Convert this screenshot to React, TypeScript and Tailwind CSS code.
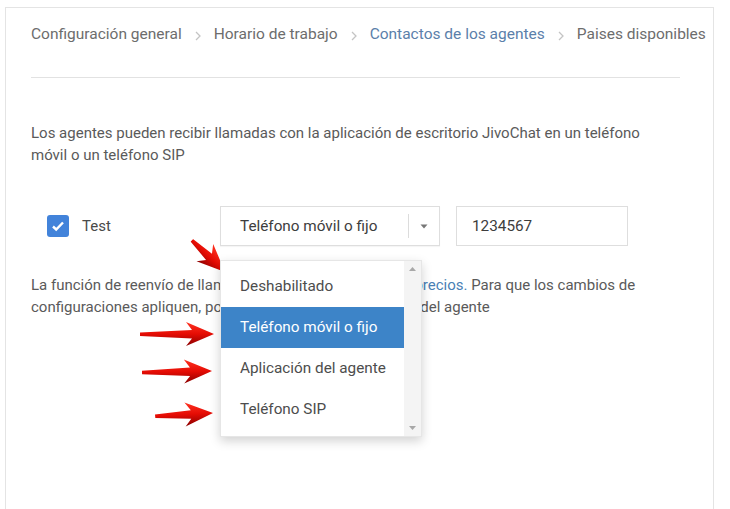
import React from 'react';

const crumbs = [
  { label: 'Configuración general' },
  { label: 'Horario de trabajo' },
  { label: 'Contactos de los agentes', active: true },
  { label: 'Paises disponibles' },
];

const options = ['Deshabilitado', 'Teléfono móvil o fijo', 'Aplicación del agente', 'Teléfono SIP'];

function Chevron() {
  return (
    <svg width="8" height="12" viewBox="0 0 8 12" className="shrink-0 mx-[12px] mt-[3px]">
      <path d="M2 2l4 4-4 4" fill="none" stroke="#c4c4c4" strokeWidth="1.3" />
    </svg>
  );
}

function RedArrow({ className, rotate = 0, length = 72, id }: { className: string; rotate?: number; length?: number; id: string }) {
  const head = 22;
  const t = length - head;
  return (
    <svg
      width={length}
      height="26"
      viewBox={`0 0 ${length} 26`}
      className={className}
      style={{ transform: `rotate(${rotate}deg)`, transformOrigin: 'right center' }}
    >
      <defs>
        <linearGradient id={id} x1="0" y1="0" x2="0" y2="1">
          <stop offset="0" stopColor="#ff3322" />
          <stop offset="0.5" stopColor="#e50c04" />
          <stop offset="1" stopColor="#8a0000" />
        </linearGradient>
      </defs>
      <path
        d={`M0 11.5 L${t} 9 L${t - 6} 1 L${length} 13 L${t - 6} 25 L${t} 17.5 L0 15 Z`}
        fill={`url(#${id})`}
      />
    </svg>
  );
}

export default function App() {
  return (
    <div className="w-[730px] h-[509px] overflow-hidden bg-white font-['Roboto',sans-serif] relative">
      <div className="ml-[5px] mt-[7px] w-[709px] min-h-[520px] border border-[#e4e4e4] px-[25px]">
        <div className="flex items-center pt-[15px] text-[15.5px] leading-[22px] text-[#6d6d6d] whitespace-nowrap">
          {crumbs.map((c, i) => (
            <React.Fragment key={c.label}>
              {i > 0 && <Chevron />}
              <span className={'shrink-0 ' + (c.active ? 'text-[#5b80aa]' : '')}>{c.label}</span>
            </React.Fragment>
          ))}
        </div>
        <div className="mt-[32px] w-[649px] border-t border-[#e2e2e2]" />

        <p className="mt-[44px] text-[15px] leading-[22px] text-[#5a5a5a] whitespace-nowrap">
          Los agentes pueden recibir llamadas con la aplicación de escritorio JivoChat en un teléfono
          <br />
          móvil o un teléfono SIP
        </p>

        <div className="mt-[40px] flex items-center h-[40px]">
          <div className="w-[189px] flex items-center">
            <div className="ml-[16px] w-[22px] h-[22px] rounded-[3px] bg-[#4283da] flex items-center justify-center">
              <svg width="14" height="12" viewBox="0 0 14 12">
                <path d="M2 6.5l3.2 3L12 2.5" fill="none" stroke="#fff" strokeWidth="2.4" />
              </svg>
            </div>
            <span className="ml-[13px] text-[15px] text-[#4a4a4a]">Test</span>
          </div>

          <div className="relative">
            <div className="w-[220px] h-[40px] border border-[#dedede] bg-white flex items-center shadow-[0_1px_1px_rgba(0,0,0,0.04)]">
              <span className="pl-[19px] flex-1 text-[15.3px] text-[#3d3d3d]">Teléfono móvil o fijo</span>
              <div className="w-px h-[24px] bg-[#dcdcdc]" />
              <div className="w-[30px] flex justify-center">
                <svg width="8" height="5" viewBox="0 0 8 5">
                  <path d="M0.5 0.5h7L4 4.5z" fill="#777" />
                </svg>
              </div>
            </div>

            <div className="absolute left-0 top-[54px] w-[202px] h-[177px] bg-white border border-[#e6e6e6] shadow-[0_4px_10px_rgba(0,0,0,0.18)] flex z-10">
              <div className="flex-1 pt-[5px]">
                {options.map((o, i) => (
                  <div
                    key={o}
                    className={
                      'h-[41px] flex items-center pl-[19px] text-[15.3px] ' +
                      (i === 1 ? 'bg-[#3d84c8] text-white' : 'text-[#4d4d4d]')
                    }
                  >
                    {o}
                  </div>
                ))}
              </div>
              <div className="w-[17px] bg-[#f4f4f4] flex flex-col items-center justify-between py-[6px]">
                <svg width="7" height="4" viewBox="0 0 7 4">
                  <path d="M0 4h7L3.5 0z" fill="#a8a8a8" />
                </svg>
                <svg width="7" height="4" viewBox="0 0 7 4">
                  <path d="M0 0h7L3.5 4z" fill="#a8a8a8" />
                </svg>
              </div>
            </div>
          </div>

          <div className="ml-[16px] w-[172px] h-[40px] border border-[#dedede] flex items-center pl-[15px] text-[15.3px] text-[#3d3d3d]">
            1234567
          </div>
        </div>

        <p className="mt-[28px] text-[15px] leading-[22px] text-[#5a5a5a] whitespace-nowrap">
          La función de reenvío de llamadas es de pago. Revisa los{' '}
          <span className="text-[#4a7fb5]">precios.</span> Para que los cambios de
          <br />
          configuraciones apliquen, por favor, recargue la aplicación del agente
        </p>
      </div>

      <RedArrow id="a1" className="absolute left-[179px] top-[259px]" rotate={44} length={46} />
      <RedArrow id="a2" className="absolute left-[140px] top-[321px]" length={74} />
      <RedArrow id="a3" className="absolute left-[142px] top-[358px]" rotate={-1} length={70} />
      <RedArrow id="a4" className="absolute left-[155px] top-[400px]" rotate={-3} length={58} />
    </div>
  );
}
